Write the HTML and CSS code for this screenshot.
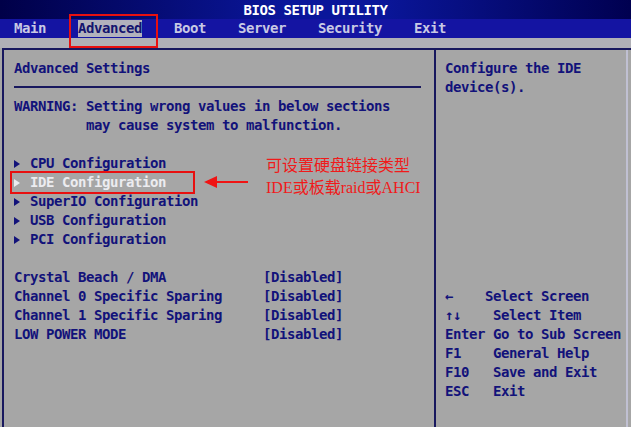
FILE: index.html
```html
<!DOCTYPE html>
<html>
  <head>
    <title>BIOS SETUP UTILITY</title>
    <link rel="stylesheet" href="styles.css">
  </head>
  <body>
    <div class="screen">
      <div class="titlebar">BIOS SETUP UTILITY</div>
      <div class="menubar">
        <span class="tab">Main</span>
        <span class="tab active">Advanced</span>
        <span class="tab">Boot</span>
        <span class="tab">Server</span>
        <span class="tab">Security</span>
        <span class="tab">Exit</span>
      </div>
      <div class="strip"></div>
      <div class="frame">
        <div class="main">
          <div class="line">Advanced Settings</div>
          <div class="rule"></div>
          <div class="line">WARNING: Setting wrong values in below sections</div>
          <div class="line">         may cause system to malfunction.</div>
          <div class="line"></div>
          <div class="line item"><svg class="arrow" viewBox="0 0 6 8"><path d="M0 0L6 4L0 8Z"/></svg>CPU Configuration</div>
          <div class="line item selected"><svg class="arrow" viewBox="0 0 6 8"><path d="M0 0L6 4L0 8Z"/></svg>IDE Configuration</div>
          <div class="line item"><svg class="arrow" viewBox="0 0 6 8"><path d="M0 0L6 4L0 8Z"/></svg>SuperIO Configuration</div>
          <div class="line item"><svg class="arrow" viewBox="0 0 6 8"><path d="M0 0L6 4L0 8Z"/></svg>USB Configuration</div>
          <div class="line item"><svg class="arrow" viewBox="0 0 6 8"><path d="M0 0L6 4L0 8Z"/></svg>PCI Configuration</div>
          <div class="line"></div>
          <div class="line setting"><span class="name">Crystal Beach / DMA</span><span>[Disabled]</span></div>
          <div class="line setting"><span class="name">Channel 0 Specific Sparing</span><span>[Disabled]</span></div>
          <div class="line setting"><span class="name">Channel 1 Specific Sparing</span><span>[Disabled]</span></div>
          <div class="line setting"><span class="name">LOW POWER MODE</span><span>[Disabled]</span></div>
        </div>
        <div class="help">
          <div class="line">Configure the IDE</div>
          <div class="line">device(s).</div>
          <div class="keys">
            <div class="line">&#8592;    Select Screen</div>
            <div class="line">&#8593;&#8595;    Select Item</div>
            <div class="line">Enter Go to Sub Screen</div>
            <div class="line">F1    General Help</div>
            <div class="line">F10   Save and Exit</div>
            <div class="line">ESC   Exit</div>
          </div>
        </div>
      </div>

      <!-- 红色标注 -->
      <div class="mark mark-tab"></div>
      <div class="mark mark-ide"></div>
      <svg class="pointer" viewBox="0 0 44 14"><path d="M12 6H44V8H12Z"/><path d="M0 7L13 1V13Z"/></svg>
      <div class="note">可设置硬盘链接类型<br/>IDE或板载raid或AHCI</div>
    </div>
  </body>
</html>
```

FILE: styles.css
```css
* {
    margin: 0;
    padding: 0;
}
html, body {
    background: #a6a6a6;
}
.screen {
    position: relative;
    width: 631px;
    height: 427px;
    overflow: hidden;
    background: #a6a6a6;
    font: bold 14px/19px "DejaVu Sans Mono", "Liberation Mono", monospace;
    letter-spacing: -0.43px;
    color: #12127a;
}
.titlebar {
    height: 19px;
    line-height: 20px;
    text-align: center;
    color: #ffffff;
    background: linear-gradient(90deg, #000048 0%, #0a169a 45%, #0a169a 60%, #000050 100%);
}
.menubar {
    display: flex;
    gap: 32px;
    height: 19px;
    padding-left: 14px;
    background: #1414a2;
    color: #c8c8e4;
}
.tab {
    line-height: 19px;
}
.tab.active {
    background: #b2b2bc;
    color: #14146e;
    margin-top: 1px;
    height: 17px;
    line-height: 17px;
}
.strip {
    height: 10px;
    background: #b0b0b6;
}
.frame {
    display: flex;
    margin-left: 2px;
    height: 400px;
    border-top: 2px solid #18185e;
    border-left: 2px solid #18185e;
}
.main {
    width: 407px;
    padding: 9px 13px 0 10px;
    border-right: 2px solid #18185e;
}
.help {
    flex: 1;
    padding: 9px 0 0 9px;
    border-right: 2px solid #c0c0d2;
    margin-right: 3px;
}
.line {
    height: 19px;
    white-space: pre;
}
.rule {
    height: 19px;
    background: linear-gradient(#18185e, #18185e) 0 8px / 100% 2px no-repeat;
}
.item {
    display: flex;
    align-items: center;
}
.arrow {
    width: 6px;
    height: 8px;
    margin-right: 10px;
    fill: #12127a;
}
.item.selected {
    color: #ececf0;
}
.item.selected .arrow {
    fill: #ececf0;
}
.setting {
    display: flex;
}
.setting .name {
    width: 249px;
}
.keys {
    margin-top: 190px;
}
.mark {
    position: absolute;
    border: 2px solid #e81010;
}
.mark-tab {
    left: 69px;
    top: 14px;
    width: 85px;
    height: 30px;
}
.mark-ide {
    left: 10px;
    top: 171px;
    width: 181px;
    height: 19px;
}
.pointer {
    position: absolute;
    left: 204px;
    top: 175px;
    width: 44px;
    height: 14px;
    fill: #f01414;
}
.note {
    position: absolute;
    left: 266px;
    top: 155px;
    font: 16px/22px "Liberation Serif", "Noto Sans CJK SC", serif;
    letter-spacing: 0;
    color: #f01a1a;
}
```
